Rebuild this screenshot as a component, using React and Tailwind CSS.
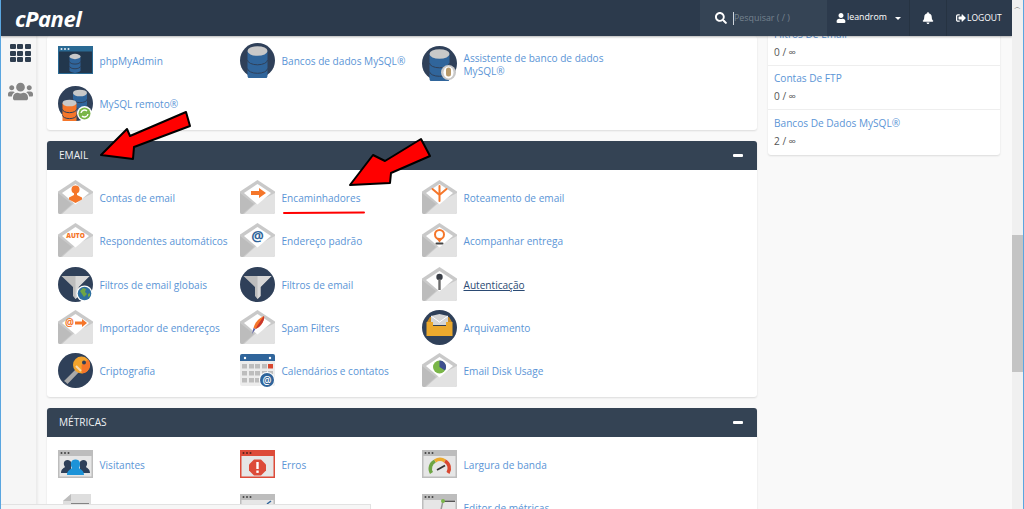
import { FaSearch, FaUser, FaBell, FaSignOutAlt, FaUsers } from 'react-icons/fa'

const orange = '#f5762a'
const navy = '#2f4059'
const blue = '#30659b'

function Envelope({ children }) {
  return (
    <svg width="35" height="35" viewBox="0 0 35 35" className="shrink-0">
      <path d="M17.5 0 L35 11.5 V32 a2 2 0 0 1 -2 2 H2 a2 2 0 0 1 -2 -2 V11.5 Z" fill="#c9c9c9" />
      <path d="M35 13 V32 a2 2 0 0 1 -2 2 H4 L17.5 22 Z" fill="#e2e2e2" />
      <path d="M0 13 L14 24 L2.5 34 H2 a2 2 0 0 1 -2 -2 Z" fill="#bcbcbc" />
      <path d="M17.5 4 L31 13 L17.5 24.5 L4 13 Z" fill="#fff" />
      {children}
    </svg>
  )
}

function Circle({ children }) {
  return (
    <svg width="35" height="35" viewBox="0 0 35 35" className="shrink-0">
      <circle cx="17.5" cy="17.5" r="17.5" fill={navy} />
      {children}
    </svg>
  )
}

function Browser({ bar = '#bdbdbd', dots = '#444', children }) {
  return (
    <svg width="35" height="28" viewBox="0 0 35 28" className="shrink-0">
      <rect width="35" height="28" fill={bar} />
      <rect x="1.5" y="6" width="32" height="20.5" fill="#e6e6e6" />
      <circle cx="3.5" cy="3" r="1" fill={dots} />
      <circle cx="7" cy="3" r="1" fill={dots} />
      <circle cx="10.5" cy="3" r="1" fill={dots} />
      {children}
    </svg>
  )
}

function Database({ x, y, w = 17, color = blue }) {
  const h = w * 1.25
  const ry = w * 0.24
  return (
    <g>
      <path d={`M${x} ${y} v${h} a${w / 2} ${ry} 0 0 0 ${w} 0 v${-h} Z`} fill={color} />
      <ellipse cx={x + w / 2} cy={y} rx={w / 2} ry={ry} fill="#c9c9c9" />
      <path d={`M${x} ${y + h * 0.36} a${w / 2} ${ry} 0 0 0 ${w} 0 M${x} ${y + h * 0.7} a${w / 2} ${ry} 0 0 0 ${w} 0`} fill="none" stroke={navy} strokeWidth="1" />
    </g>
  )
}

function Funnel() {
  return (
    <>
      <path d="M3.5 9 H31.5 L20.5 20 V29 L17.5 32 L15 29 V20 Z" fill="#bdbdbd" />
      <path d="M17.5 9 H31.5 L20.5 20 V29 L17.5 32 Z" fill="#d8d8d8" />
    </>
  )
}

const PhpMyAdmin = () => (
  <svg width="35" height="28" viewBox="0 0 35 28" className="shrink-0">
    <rect width="35" height="28" fill="#2a6a94" />
    <rect x="1" y="5.5" width="33" height="21.5" fill="#22374d" />
    <circle cx="3.5" cy="3" r="1" fill="#e6eef5" />
    <circle cx="7" cy="3" r="1" fill="#e6eef5" />
    <circle cx="10.5" cy="3" r="1" fill="#e6eef5" />
    <Database x={11.5} y={10.5} w={11} />
  </svg>
)

const MysqlDb = () => (
  <Circle>
    <Database x={7.5} y={8} w={20} />
  </Circle>
)

const RemoteMysql = () => (
  <svg width="35" height="35" viewBox="0 0 35 35" className="shrink-0">
    <circle cx="17.5" cy="17.5" r="17.5" fill={navy} />
    <Database x={15} y={7} w={14} />
    <Database x={4.5} y={17} w={14} color={orange} />
    <circle cx="26.5" cy="27.5" r="7.5" fill="#fff" />
    <circle cx="26.5" cy="27.5" r="6" fill="#7ab648" />
    <path d="M23 27 a3.6 3.6 0 0 1 6 -2 M30 28 a3.6 3.6 0 0 1 -6 2" fill="none" stroke="#fff" strokeWidth="1.4" />
  </svg>
)

const MysqlWizard = () => (
  <svg width="35" height="35" viewBox="0 0 35 35" className="shrink-0 mt-[6px]">
    <circle cx="17.5" cy="17.5" r="17.5" fill={navy} />
    <Database x={7.5} y={8} w={20} />
    <circle cx="26.5" cy="26.5" r="7.5" fill="#c9c9c9" />
    <ellipse cx="26.5" cy="26.5" rx="5" ry="6" fill="#fff" />
    <path d="M24 24 a2.5 2.5 0 0 1 5 0 v4 a2.5 2.5 0 0 1 -5 0 Z" fill="#b89a6a" />
  </svg>
)

const icons = {
  contas: (
    <Envelope>
      <circle cx="17.5" cy="9.5" r="4" fill={orange} />
      <path d="M16 13 h3 v2 l5 2.5 v2 l-6.5 3.5 L11 19.5 v-2 l5 -2.5 Z" fill={orange} />
    </Envelope>
  ),
  encaminhadores: (
    <Envelope>
      <path d="M11 11 H19 V8 L26 13 L19 18 V15 H11 Z" fill={orange} />
    </Envelope>
  ),
  roteamento: (
    <Envelope>
      <path d="M17.5 6 V21 M10.5 9 L17.5 15 L24.5 9" fill="none" stroke={orange} strokeWidth="2" strokeLinecap="round" />
    </Envelope>
  ),
  auto: (
    <Envelope>
      <text x="17.5" y="15" textAnchor="middle" fontFamily="'Open Sans', sans-serif" fontSize="6.5" fontWeight="800" fill={orange}>AUTO</text>
    </Envelope>
  ),
  padrao: (
    <Envelope>
      <text x="17.5" y="18" textAnchor="middle" fontFamily="'Open Sans', sans-serif" fontSize="14" fontWeight="700" fill={blue}>@</text>
    </Envelope>
  ),
  entrega: (
    <Envelope>
      <circle cx="17.5" cy="11.5" r="4.5" fill="none" stroke={orange} strokeWidth="2" />
      <path d="M14 15 L17.5 19.5 L21 15" fill={orange} />
      <rect x="13.5" y="19.5" width="8" height="2" rx="1" fill="#444" />
    </Envelope>
  ),
  autenticacao: (
    <Envelope>
      <circle cx="17.5" cy="10" r="3.2" fill="#3a3f47" />
      <rect x="16.3" y="12" width="2.4" height="11" fill="#6b6b6b" />
    </Envelope>
  ),
  importador: (
    <Envelope>
      <text x="11.5" y="16" textAnchor="middle" fontFamily="'Open Sans', sans-serif" fontSize="10" fontWeight="700" fill={orange}>@</text>
      <path d="M17 11.5 H24 V9 L29 13 L24 17 V14.5 H17 Z" fill={orange} />
    </Envelope>
  ),
  spam: (
    <Envelope>
      <path d="M24 6 C25 10 21 17 15.5 19 L13.5 18 C15 12 19 8 24 6 Z" fill={orange} />
      <path d="M24 6 C25 10 21 17 15.5 19 C18 14 21 10 24 6 Z" fill="#c8372d" />
      <path d="M13.5 18 L15.5 19 L12 24 Z" fill="#5a5fa8" />
    </Envelope>
  ),
  diskUsage: (
    <Envelope>
      <circle cx="17.5" cy="14" r="6.5" fill="#7ab648" />
      <path d="M17.5 14 V7.5 A6.5 6.5 0 0 1 23 17.5 Z" fill="#3d4f8f" />
    </Envelope>
  ),
  filtrosGlobais: (
    <svg width="35" height="35" viewBox="0 0 35 35" className="shrink-0">
      <circle cx="17.5" cy="17.5" r="17.5" fill={navy} />
      <Funnel />
      <circle cx="26.5" cy="26.5" r="8" fill="#fff" />
      <circle cx="26.5" cy="26.5" r="6.8" fill="#2e6f9f" />
      <path d="M22 24 l3 -3 l3 1 l-1 3 l2 2 l-3 3 l-2 -3 Z M30 27 l2 -1 v3 l-2 1 Z" fill="#6ea544" />
    </svg>
  ),
  filtros: (
    <Circle>
      <Funnel />
    </Circle>
  ),
  arquivamento: (
    <Circle>
      <path d="M5 12 L8 7 H27 L30 12 Z" fill="#c98a25" />
      <path d="M9 6 L17.5 4 L26 6 V15 H9 Z" fill="#d6d6d6" />
      <path d="M9 6 L17.5 12 L26 6" fill="none" stroke="#ffffff" strokeWidth="1" />
      <path d="M4.5 12 H11 V16 H24 V12 H30.5 V26 H4.5 Z" fill="#eba92e" />
    </Circle>
  ),
  criptografia: (
    <Circle>
      <path d="M6 28 L19 15 L22 18 L9.5 31 L7.5 29 Z" fill="#a8a8a8" />
      <circle cx="23.5" cy="12" r="8.5" fill="#f3a32c" />
      <path d="M23.5 12 L30 6.5 A8.5 8.5 0 0 1 24 20.5 Z" fill={orange} />
      <circle cx="26" cy="9.5" r="2" fill={navy} />
      <path d="M18 13 l5 5" stroke="#f6d9b0" strokeWidth="2" />
    </Circle>
  ),
  calendario: (
    <svg width="35" height="33" viewBox="0 0 35 33" className="shrink-0">
      <rect y="0" width="35" height="32" rx="2" fill="#ececec" />
      <path d="M0 9 V2 a2 2 0 0 1 2 -2 H33 a2 2 0 0 1 2 2 V7 H0 Z" fill={blue} />
      <circle cx="5" cy="4" r="1.2" fill="#fff" />
      <circle cx="30" cy="4" r="1.2" fill="#fff" />
      {[10, 17, 24].map(y => [2, 9, 15, 22, 28].map(x => (
        <rect key={`${x}-${y}`} x={x} y={y} width="5" height="4.5" fill={x === 28 && y === 10 ? '#d9472f' : '#bdbdbd'} />
      )))}
      <circle cx="27" cy="26" r="8" fill="#fff" />
      <circle cx="27" cy="26" r="7" fill={blue} />
      <text x="27" y="29.5" textAnchor="middle" fontFamily="'Open Sans', sans-serif" fontSize="10" fontWeight="600" fill="#fff">@</text>
    </svg>
  ),
  visitantes: (
    <Browser>
      <path d="M3 23 c0 -4 3 -5 4 -6 c-2 -3 -1.5 -7 2.5 -7 c2 0 3 1 3.5 2 L13 23 Z M32 23 c0 -4 -3 -5 -4 -6 c2 -3 1.5 -7 -2.5 -7 c-2 0 -3 1 -3.5 2 L22 23 Z" fill="#2f4059" />
      <path d="M9 25 c0 -5 4 -5.5 5 -7 c-2 -3.5 -1.5 -8.5 3.5 -8.5 s5.5 5 3.5 8.5 c1 1.5 5 2 5 7 Z" fill="#1c93d8" />
    </Browser>
  ),
  erros: (
    <Browser bar="#dd4b39" dots="#55231c">
      <path d="M14 9.5 h7 l5 5 v6 l-5 5 h-7 l-5 -5 v-6 Z" fill="#dd4b39" />
      <rect x="16.3" y="12" width="2.4" height="7" fill="#fff" />
      <rect x="16.3" y="20.5" width="2.4" height="2.4" fill="#fff" />
    </Browser>
  ),
  largura: (
    <Browser>
      <path d="M9.5 23 A8.5 8.5 0 0 1 13 11" fill="none" stroke="#6ea544" strokeWidth="3.5" />
      <path d="M13 11 A8.5 8.5 0 0 1 23 11" fill="none" stroke="#eba92e" strokeWidth="3.5" />
      <path d="M23 11 A8.5 8.5 0 0 1 26 23" fill="none" stroke="#d9472f" strokeWidth="3.5" />
      <path d="M15 20 L23 15.5" stroke="#333" strokeWidth="1.8" />
    </Browser>
  ),
  documento: (
    <svg width="29" height="28" viewBox="0 0 29 28" className="shrink-0 ml-[3px]">
      <path d="M8 0 H28 V28 H0 V7 Z" fill="#dedede" />
      <path d="M0 7 H8 V0 Z" fill="#bdbdbd" />
      <path d="M8 10 H26 M4 14 H26" stroke="#666" strokeWidth="1.5" />
    </svg>
  ),
  stats: (
    <Browser>
      <path d="M31 7 L27 10" stroke="#30659b" strokeWidth="1.5" />
    </Browser>
  ),
  editor: (
    <Browser>
      <rect x="21" y="6.5" width="12" height="1.5" fill="#555" />
      <path d="M21 7 L18 20" stroke="#999" strokeWidth="1.5" />
      <circle cx="21" cy="7" r="2" fill="#7ab648" />
      <path d="M18 16 h6 v10 h-6 Z" fill="#fff" />
    </Browser>
  ),
}

function Item({ icon, label, className = 'text-[#5b95d6] mt-[2px]' }) {
  return (
    <div className="flex items-center h-[43.25px]">
      <div className="w-[35px] shrink-0 flex justify-center">{icon}</div>
      {label && <span className={`ml-[6.5px] w-[145px] text-[10.1px] leading-[13px] ${className}`}>{label}</span>}
    </div>
  )
}

function Panel({ title, children, className = '' }) {
  return (
    <section className={`bg-white rounded-[3px] shadow-[0_1px_2px_rgba(0,0,0,0.12)] ${className}`}>
      {title && (
        <header className="h-[29px] bg-[#344354] rounded-t-[3px] pl-[12px] pr-[14px] flex items-center justify-between">
          <h2 className="text-[10.1px] text-[#eef1f4]">{title}</h2>
          <span className="w-[10px] h-[3px] bg-white rounded-[1px]" />
        </header>
      )}
      <div className="grid grid-cols-[182px_182px_182px] pl-[11px]">{children}</div>
    </section>
  )
}

function Stat({ label, value }) {
  return (
    <div className="h-[44.5px] px-[6px] border-b border-[#eeeeee] last:border-b-0 flex flex-col">
      <span className="mt-[5.5px] text-[10.1px] leading-[15px] text-[#5b95d6]">{label}</span>
      <span className="mt-[3px] text-[10.1px] leading-[15px] text-[#555]">{value}</span>
    </div>
  )
}

export default function App() {
  return (
    <div className="relative w-[1024px] h-[509px] overflow-hidden flex bg-[#f9f9f9] border-l border-r border-[#5aa6e0] font-['Open_Sans',sans-serif]">
      <div className="flex-1 flex flex-col min-w-0">
        <nav className="relative z-10 h-[36px] shrink-0 bg-[#2c3a4c] shadow-[0_1px_2px_rgba(0,0,0,0.3)] flex items-center text-white">
          <span className="ml-[14px] text-[22px] leading-none font-bold italic tracking-[-0.5px]">cPanel</span>
          <div className="ml-auto h-full w-[127px] bg-[#354455] flex items-center">
            <FaSearch className="ml-[15px] text-[12px]" />
            <span className="ml-[6px] border-l border-[#cfd5db] h-[13px]" />
            <span className="text-[8.9px] text-[#76838f]">Pesquisar ( / )</span>
          </div>
          <div className="h-full w-[83px] border-r border-[#263342] flex items-center">
            <FaUser className="ml-[9px] text-[10px]" />
            <span className="ml-[1px] text-[8.8px]">leandrom</span>
            <span className="ml-[8px] border-x-[3.5px] border-x-transparent border-t-[3.5px] border-t-white" />
          </div>
          <div className="h-full w-[37px] border-r border-[#263342] flex items-center justify-center">
            <FaBell className="text-[12px]" />
          </div>
          <div className="h-full w-[65px] flex items-center">
            <FaSignOutAlt className="ml-[9px] text-[10px]" />
            <span className="ml-[1px] text-[8.5px]">LOGOUT</span>
          </div>
        </nav>

        <div className="flex-1 flex min-h-0">
          <aside className="w-[36px] shrink-0 pl-[3px] bg-[#f6f6f6] border-r border-[#ececec] shadow-[1px_0_2px_rgba(0,0,0,0.06)] flex flex-col items-center">
            <div className="mt-[8px] grid grid-cols-3 gap-[1.5px]">
              {[0, 1, 2, 3, 4, 5, 6, 7, 8].map(n => (
                <span key={n} className="w-[6px] h-[5px] rounded-[1px] bg-[#2f3e4f]" />
              ))}
            </div>
            <FaUsers className="mt-[16.5px] text-[25px] text-[#858585]" />
          </aside>

          <main className="ml-[10px] w-[710px] shrink-0 flex flex-col gap-[11px]">
            <Panel className="pt-[2.7px] pb-[4.7px]">
              <Item icon={<PhpMyAdmin />} label="phpMyAdmin" />
              <Item icon={<MysqlDb />} label="Bancos de dados MySQL®" />
              <Item icon={<MysqlWizard />} label="Assistente de banco de dados MySQL®" className="text-[#5b95d6] mt-[10px]" />
              <Item icon={<RemoteMysql />} label="MySQL remoto®" />
            </Panel>

            <Panel title="EMAIL">
              <div className="col-span-3 h-[6px]" />
              <Item icon={icons.contas} label="Contas de email" />
              <Item icon={icons.encaminhadores} label="Encaminhadores" />
              <Item icon={icons.roteamento} label="Roteamento de email" />
              <Item icon={icons.auto} label="Respondentes automáticos" />
              <Item icon={icons.padrao} label="Endereço padrão" />
              <Item icon={icons.entrega} label="Acompanhar entrega" />
              <Item icon={icons.filtrosGlobais} label="Filtros de email globais" />
              <Item icon={icons.filtros} label="Filtros de email" />
              <Item icon={icons.autenticacao} label="Autenticação" className="text-[#2b4a73] underline mt-[2px]" />
              <Item icon={icons.importador} label="Importador de endereços" />
              <Item icon={icons.spam} label="Spam Filters" />
              <Item icon={icons.arquivamento} label="Arquivamento" />
              <Item icon={icons.criptografia} label="Criptografia" />
              <Item icon={icons.calendario} label="Calendários e contatos" />
              <Item icon={icons.diskUsage} label="Email Disk Usage" />
              <div className="col-span-3 h-[4.5px]" />
            </Panel>

            <Panel title="MÉTRICAS">
              <div className="col-span-3 h-[6px]" />
              <Item icon={icons.visitantes} label="Visitantes" />
              <Item icon={icons.erros} label="Erros" />
              <Item icon={icons.largura} label="Largura de banda" />
              <Item icon={icons.documento} />
              <Item icon={icons.stats} />
              <Item icon={icons.editor} label="Editor de métricas" />
            </Panel>
          </main>

          <aside className="ml-[11px] mt-[-15px] w-[232px] shrink-0 self-start bg-white rounded-[3px] shadow-[0_1px_2px_rgba(0,0,0,0.12)]">
            <Stat label="Filtros De Email" value="0 / ∞" />
            <Stat label="Contas De FTP" value="0 / ∞" />
            <Stat label="Bancos De Dados MySQL®" value="2 / ∞" />
          </aside>
        </div>
      </div>

      {/* barra de rolagem */}
      <div className="relative z-20 w-[11px] shrink-0 bg-[#f0f0f0] flex flex-col">
        <span className="mt-[3px] mx-auto text-[7px] leading-none text-[#606060]">︿</span>
        <div className="mt-[225px] h-[137px] bg-[#c4c4c4]" />
      </div>

      {/* setas vermelhas desenhadas por cima da captura */}
      <svg className="absolute inset-0 z-30 pointer-events-none" width="1024" height="509" viewBox="0 0 1024 509">
        <path d="M100 155 L126 129 L129 136 L185 112 L189 126 L133 147 L132 159 Z" fill="#f00" stroke="#000" strokeWidth="2" strokeLinejoin="round" />
        <path d="M349 185 L372 155 L384 161 L420 139 L429 156 L390 173 L389 183 Z" fill="#f00" stroke="#000" strokeWidth="2" strokeLinejoin="round" />
        <path d="M283 213 L363 212.5" stroke="#f00" strokeWidth="2" strokeLinecap="round" />
      </svg>

      <div className="absolute left-0 bottom-0 z-20 w-[370px] h-[5px] bg-[#f6f6f6] border-t border-r border-[#e2e2e2]" />
    </div>
  )
}
